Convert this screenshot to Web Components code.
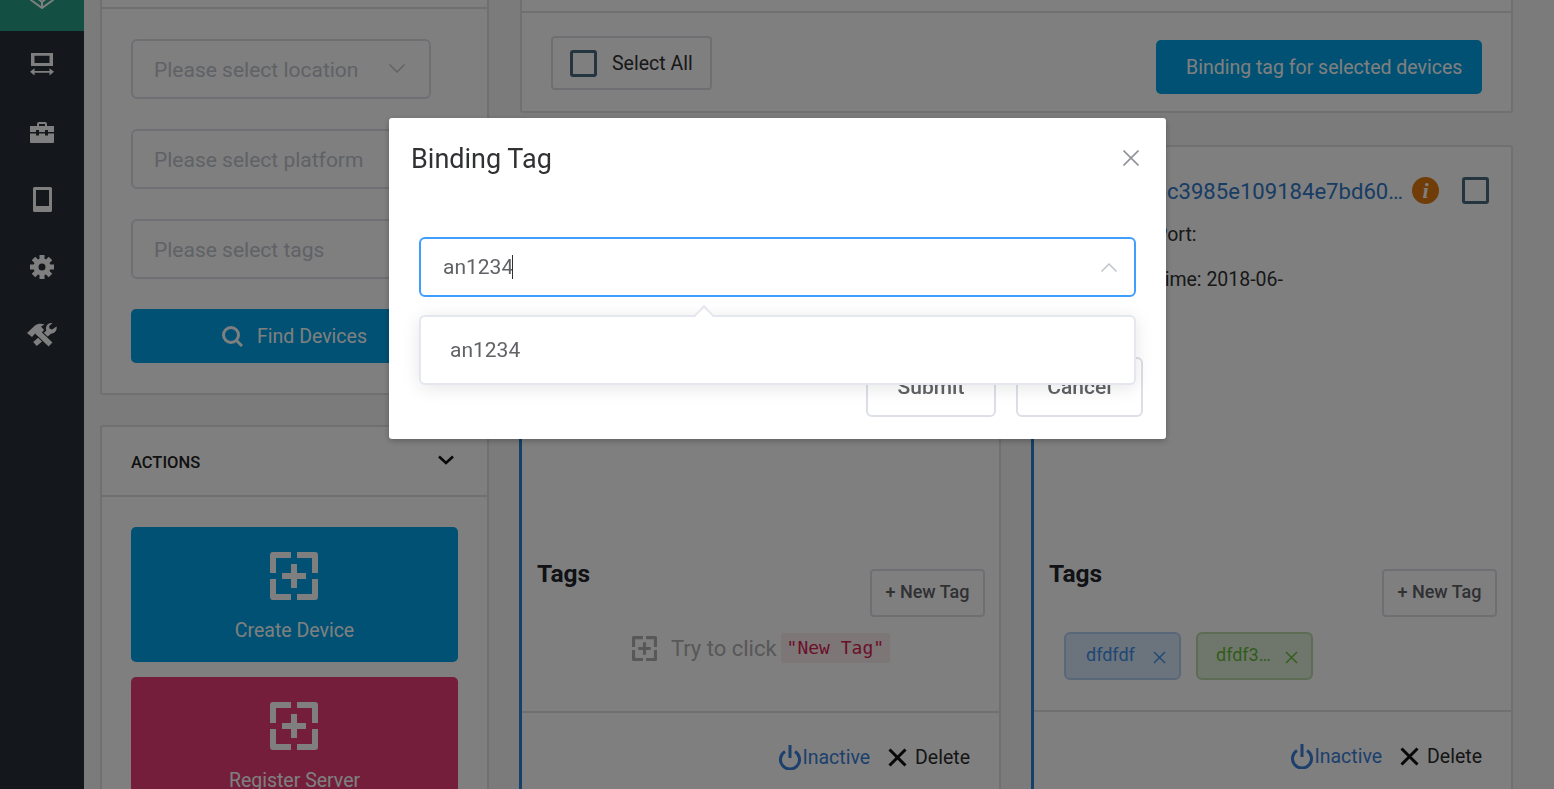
<!DOCTYPE html>
<html>
<head>
<meta charset="utf-8">
<title>Devices</title>
<style>
  html, body { margin: 0; height: 789px; overflow: hidden; background: #f6f6f6; }
  body { font-family: Roboto, "Liberation Sans", sans-serif; color: #303133; }
</style>
</head>
<body>
<device-page></device-page>

<script>
const addIcon = `<svg viewBox="0 0 48 48" fill="currentColor" style="display:block;width:100%;height:100%"><path d="M0 3a3 3 0 0 1 3-3h18v6H6v15H0zM27 0h18a3 3 0 0 1 3 3v18h-6V6H27zM0 27h6v15h15v6H3a3 3 0 0 1-3-3zM42 27h6v18a3 3 0 0 1-3 3H27v-6h15zM21 12h6v9h9v6h-9v9h-6v-9h-9v-6h9z"/></svg>`;

class AppSidebar extends HTMLElement {
  constructor() {
    super();
    this.attachShadow({ mode: "open" });
  }

  static get styles() {
    return /* css */`
      :host {
        display: block;
        flex: none;
        width: 84px;
        height: 789px;
        background: #283138;
        color: #fff;
      }
      .logo {
        height: 31px;
        background: #269e86;
        display: flex;
        justify-content: center;
        align-items: flex-end;
        overflow: hidden;
      }
      .logo svg { flex: none; margin-bottom: 22px; }
      .item {
        height: 67.5px;
        display: flex;
        align-items: center;
        justify-content: center;
      }
      svg { display: block; }
    `;
  }

  connectedCallback() {
    this.shadowRoot.innerHTML = /* html */`
    <style>${AppSidebar.styles}</style>
    <div class="logo">
      <svg width="24" height="24" viewBox="0 0 24 24" fill="none" stroke="#fff" stroke-width="2">
        <path d="M1 10v5l11 8 11-8v-5M6 12l6 5 6-5M12 17v6M1 15l5-3M23 15l-5-3"/>
      </svg>
    </div>
    <div class="item">
      <svg width="24" height="23" viewBox="0 0 24 25" preserveAspectRatio="none" fill="#fff">
        <path fill-rule="evenodd" d="M1 0h22v14H1zM4.500 3v8h15V3z"/>
        <path d="M0 20.500 4.500 16.500v3h15v-3l4.500 4-4.500 4v-3h-15v3z"/>
      </svg>
    </div>
    <div class="item">
      <svg width="24" height="21" viewBox="0 0 24 21" fill="#fff">
        <path fill-rule="evenodd" d="M7 4V2a2 2 0 0 1 2-2h6a2 2 0 0 1 2 2v2h7v6h-6V8h-3v2H9V8H6v2H0V4zM9 2v2h6V2z"/>
        <path d="M0 11.500h6v2h3v-2h6v2h3v-2h6V20a1 1 0 0 1-1 1H1a1 1 0 0 1-1-1z"/>
      </svg>
    </div>
    <div class="item">
      <svg width="19" height="25" viewBox="0 0 19 25" fill="#fff">
        <path fill-rule="evenodd" d="M1.500 0h16A1.500 1.500 0 0 1 19 1.500v22a1.500 1.500 0 0 1-1.500 1.500h-16A1.500 1.500 0 0 1 0 23.500v-22A1.500 1.500 0 0 1 1.500 0zM3 3v16h13V3z"/>
      </svg>
    </div>
    <div class="item">
      <svg width="24" height="24" viewBox="0 0 24 24">
        <g stroke="#fff" stroke-width="5">
          <path d="M12 0v24M0 12h24M3.500 3.500l17 17M20.500 3.500l-17 17"/>
        </g>
        <circle cx="12" cy="12" r="8.500" fill="#fff"/>
        <circle cx="12" cy="12" r="3.500" fill="#283138"/>
      </svg>
    </div>
    <div class="item">
      <svg width="30" height="24" viewBox="0 0 30 24">
        <path d="M23 8 8 21" stroke="#fff" stroke-width="5.500" fill="none"/>
        <path fill="#fff" d="M29.500 3.500c1 4-2.500 7.500-6.500 7-2.500-.5-4.500-3-4-6 .500-3 3.500-5 6.500-4.500L22 3.200l.7 2.500 2.500.7z"/>
        <path d="M10 8.500 23.500 21.500" stroke="#283138" stroke-width="7.500" fill="none"/>
        <path d="M10 8.500 23.500 21.500" stroke="#fff" stroke-width="5.500" fill="none"/>
        <path fill="#fff" d="M0 10 8 2.500C10.500.5 14 0 17.500 1.500L14 3.500l3 3.500-5.500 6-3-3-3.500 4z"/>
      </svg>
    </div>`;
  }
}

class SidePanel extends HTMLElement {
  constructor() {
    super();
    this.attachShadow({ mode: "open" });
  }

  connectedCallback() {
    const title = this.getAttribute("heading");
    this.shadowRoot.innerHTML = /* html */`
    <style>
      :host {
        display: block;
        box-sizing: border-box;
        background: #fff;
        border: 2px solid #e0e0e0;
        border-radius: 3px;
      }
      :host([clipped]) { border-top: 0; border-radius: 0 0 3px 3px; }
      header {
        box-sizing: border-box;
        height: var(--head, 70px);
        border-bottom: 2px solid #e0e0e0;
        display: flex;
        align-items: center;
        justify-content: space-between;
        padding: 2px 33px 0 29px;
        font-size: 16.500px;
        font-weight: 500;
        color: #1f2225;
      }
      .body { padding: var(--pad, 30px 29px); }
      svg { display: block; margin-top: -4px; }
    </style>
    <header>
      ${title ? `<span>${title}</span><svg width="16" height="10" viewBox="0 0 16 10" fill="none" stroke="#111" stroke-width="2.600"><path d="M1 1.500 8 8l7-6.500"/></svg>` : ""}
    </header>
    <div class="body"><slot></slot></div>`;
  }
}

class FilterSelect extends HTMLElement {
  constructor() {
    super();
    this.attachShadow({ mode: "open" });
    this.shadowRoot.innerHTML = /* html */`
    <style>
      :host {
        display: flex;
        box-sizing: border-box;
        width: 300px;
        height: 60px;
        align-items: center;
        justify-content: space-between;
        padding: 1px 24px 0 21px;
        margin-bottom: 30px;
        border: 2px solid #dcdfe6;
        border-radius: 6px;
        font-size: 21px;
        color: #c0c4cc;
        white-space: nowrap;
      }
      svg { flex: none; margin-top: -2px; }
    </style>
    <slot></slot>
    <svg width="16" height="9" viewBox="0 0 16 9" fill="none" stroke="#c0c4cc" stroke-width="1.500"><path d="M.5.500 8 8 15.500.500"/></svg>`;
  }
}

class PrimaryButton extends HTMLElement {
  constructor() {
    super();
    this.attachShadow({ mode: "open" });
    this.shadowRoot.innerHTML = /* html */`
    <style>
      :host {
        display: flex;
        box-sizing: border-box;
        height: 54px;
        align-items: center;
        justify-content: center;
        gap: 14px;
        background: #00a3e8;
        color: #fff;
        border-radius: 5px;
        font-size: 19.500px;
        white-space: nowrap;
      }
    </style>
    <slot></slot>`;
  }
}

class ActionTile extends HTMLElement {
  constructor() {
    super();
    this.attachShadow({ mode: "open" });
    this.shadowRoot.innerHTML = /* html */`
    <style>
      :host {
        display: flex;
        flex-direction: column;
        align-items: center;
        box-sizing: border-box;
        height: 135px;
        margin-bottom: 15px;
        padding-top: 25px;
        background: var(--tile, #00a3e8);
        color: #fff;
        border-radius: 5px;
        font-size: 19.500px;
      }
      .icon { width: 48px; height: 48px; margin: 0 1px 19px 0; }
    </style>
    <div class="icon">${addIcon}</div>
    <slot></slot>`;
  }
}

class CheckBox extends HTMLElement {
  constructor() {
    super();
    this.attachShadow({ mode: "open" });
    this.shadowRoot.innerHTML = /* html */`
    <style>
      :host {
        display: block;
        flex: none;
        box-sizing: border-box;
        width: 27px;
        height: 27px;
        border: 3px solid #4a6a80;
        border-radius: 3px;
      }
    </style>`;
  }
}

class TagChip extends HTMLElement {
  constructor() {
    super();
    this.attachShadow({ mode: "open" });
    this.shadowRoot.innerHTML = /* html */`
    <style>
      :host {
        display: flex;
        box-sizing: border-box;
        width: 117px;
        height: 48px;
        align-items: center;
        justify-content: space-between;
        padding: 0 13px 0 var(--left, 20px);
        border: 2px solid var(--line);
        background: var(--fill);
        color: var(--ink);
        border-radius: 6px;
        font-size: 18px;
      }
      span { margin-top: -3px; }
      svg { display: block; flex: none; margin-top: 3px; }
    </style>
    <span><slot></slot></span>
    <svg width="13" height="13" viewBox="0 0 13 13" fill="none" stroke="currentColor" stroke-width="1.400"><path d="m1 1 11 11M12 1 1 12"/></svg>`;
  }
}

class DeviceCard extends HTMLElement {
  constructor() {
    super();
    this.attachShadow({ mode: "open" });
    this.shadowRoot.innerHTML = /* html */`
    <style>
      :host {
        display: block;
        box-sizing: border-box;
        height: 760px;
        background: #fff;
        border: 2px solid #e0e0e0;
        border-left: 3px solid #2a80d0;
        border-radius: 3px;
      }
      .info { height: 412px; box-sizing: border-box; }
      .tags { height: var(--tags, 152px); box-sizing: border-box; padding: 0 14px 0 15px; }
      .tags-head {
        display: flex;
        justify-content: space-between;
        height: 73px;
      }
      h3 {
        margin: 0;
        font-size: 24.500px;
        font-weight: 700;
        line-height: 30px;
        color: #21252a;
      }
      .new-tag {
        box-sizing: border-box;
        width: 115px;
        height: 48px;
        margin-top: 10px;
        padding-bottom: 3px;
        border: 2px solid #dcdfe6;
        border-radius: 4px;
        display: flex;
        align-items: center;
        justify-content: center;
        font-size: 18px;
        font-weight: 500;
        color: #606266;
        background: #fff;
      }
      footer {
        box-sizing: border-box;
        border-top: 2px solid #e0e0e0;
        height: 90px;
        display: flex;
        justify-content: flex-end;
        align-items: center;
        gap: 18px;
        padding: 0 29px 0 0;
        font-size: 19.500px;
      }
      .power {
        display: flex;
        align-items: center;
        gap: 1px;
        color: #3a7fd8;
      }
      .remove {
        display: flex;
        align-items: center;
        gap: 8px;
        color: #2b2b2b;
      }
      svg { display: block; flex: none; }
    </style>
    <div class="info"><slot name="info"></slot></div>
    <div class="tags">
      <div class="tags-head"><h3>Tags</h3><div class="new-tag">+ New Tag</div></div>
      <slot></slot>
    </div>
    <footer>
      <div class="power">
        <svg width="22" height="25" viewBox="0 0 22 25" fill="none" stroke="currentColor" stroke-width="3"><path d="M6 6.500a9.500 9.500 0 1 0 10 0M11 0v13"/></svg>
        <span>Inactive</span>
      </div>
      <div class="remove">
        <svg width="19" height="19" viewBox="0 0 19 19" fill="none" stroke="#111" stroke-width="3"><path d="m1.500 1.500 16 16M17.500 1.500l-16 16"/></svg>
        <span>Delete</span>
      </div>
    </footer>`;
  }
}

class EmptyTags extends HTMLElement {
  constructor() {
    super();
    this.attachShadow({ mode: "open" });
    this.shadowRoot.innerHTML = /* html */`
    <style>
      :host {
        display: flex;
        align-items: center;
        justify-content: center;
        height: 30px;
        margin-top: 1px;
        font-size: 22px;
        color: #b0b0b0;
        white-space: nowrap;
      }
      .icon { width: 25px; height: 25px; margin-right: 14px; }
      code {
        font-family: "DejaVu Sans Mono", monospace;
        font-size: 18px;
        color: #d8204f;
        background: #f9ecef;
        border-radius: 3px;
        line-height: 30px;
        padding: 0 6px;
        margin-left: 4px;
      }
    </style>
    <div class="icon">${addIcon}</div>
    <span>Try to click</span><code>"New Tag"</code>`;
  }
}

class BindingDialog extends HTMLElement {
  constructor() {
    super();
    this.attachShadow({ mode: "open" });
  }

  static get styles() {
    return /* css */`
      :host {
        position: fixed;
        inset: 0;
        z-index: 10;
        display: block;
        background: rgba(0, 0, 0, .5);
      }
      .dialog {
        position: relative;
        box-sizing: border-box;
        width: 777px;
        height: 321px;
        margin: 118px 0 0 389px;
        background: #fff;
        border-radius: 3px;
        box-shadow: 0 2px 6px rgba(0, 0, 0, .25);
      }
      header {
        display: flex;
        justify-content: space-between;
        align-items: center;
        height: 84px;
        padding: 0 27px 0 22px;
        font-size: 27px;
        color: #303133;
      }
      header span { margin-top: -2px; }
      header svg { margin-top: -4px; }
      .content { padding: 35px 30px 0; }
      .input {
        box-sizing: border-box;
        width: 717px;
        height: 60px;
        display: flex;
        align-items: center;
        justify-content: space-between;
        padding: 0 17px 0 22px;
        border: 2px solid #409eff;
        border-radius: 6px;
        font-size: 21px;
        color: #606266;
      }
      .caret {
        display: inline-block;
        width: 1px;
        height: 24px;
        margin-left: -1px;
        background: #303133;
        vertical-align: -5px;
      }
      .actions {
        display: flex;
        justify-content: flex-end;
        gap: 20px;
        margin: 60px -7px 0 0;
      }
      .btn {
        box-sizing: border-box;
        height: 60px;
        border: 2px solid #dcdfe6;
        border-radius: 6px;
        display: flex;
        align-items: center;
        justify-content: center;
        font-size: 21px;
        font-weight: 500;
        color: #606266;
      }
      .submit { width: 130px; }
      .cancel { width: 127px; }
      .dropdown {
        position: absolute;
        left: 30px;
        top: 197px;
        box-sizing: border-box;
        width: 717px;
        height: 70px;
        display: flex;
        align-items: center;
        padding: 0 0 0 29px;
        background: #fff;
        border: 2px solid #e4e7ed;
        border-radius: 6px;
        box-shadow: 0 3px 18px rgba(0, 0, 0, .1);
        font-size: 21px;
        color: #606266;
      }
      .dropdown::before {
        content: "";
        position: absolute;
        left: 276px;
        top: -9px;
        width: 12px;
        height: 12px;
        background: #fff;
        border-left: 2px solid #e4e7ed;
        border-top: 2px solid #e4e7ed;
        transform: rotate(45deg);
      }
      svg { display: block; flex: none; }
    `;
  }

  connectedCallback() {
    this.shadowRoot.innerHTML = /* html */`
    <style>${BindingDialog.styles}</style>
    <div class="dialog">
      <header>
        <span>Binding Tag</span>
        <svg width="16" height="16" viewBox="0 0 16 16" fill="none" stroke="#909399" stroke-width="1.600"><path d="m.5.500 15 15M15.500.500l-15 15"/></svg>
      </header>
      <div class="content">
        <div class="input">
          <span>an1234<span class="caret"></span></span>
          <svg width="16" height="9" viewBox="0 0 16 9" fill="none" stroke="#c0c4cc" stroke-width="1.500"><path d="M.5 8.500 8 1l7.500 7.500"/></svg>
        </div>
        <div class="actions">
          <div class="btn submit">Submit</div>
          <div class="btn cancel">Cancel</div>
        </div>
      </div>
      <div class="dropdown">an1234</div>
    </div>`;
  }
}

class DevicePage extends HTMLElement {
  constructor() {
    super();
    this.attachShadow({ mode: "open" });
  }

  static get styles() {
    return /* css */`
      :host { display: flex; height: 789px; overflow: hidden; }
      .left {
        flex: none;
        width: 389px;
        margin-left: 16px;
        display: flex;
        flex-direction: column;
        gap: 30px;
      }
      .right {
        flex: none;
        width: 993px;
        margin-left: 31px;
        display: flex;
        flex-direction: column;
        gap: 32px;
      }
      .top-panel { --head: 13px; --pad: 23px 29px 17px 29px; }
      .filter-panel { --head: 9px; }
      .search { display: block; }
      .bar { display: flex; justify-content: space-between; align-items: flex-start; }
      .select-all {
        box-sizing: border-box;
        width: 161px;
        height: 54px;
        display: flex;
        align-items: center;
        gap: 15px;
        padding-left: 17px;
        border: 2px solid #dcdfe6;
        border-radius: 4px;
        font-size: 19.500px;
        color: #303133;
      }
      .bind { width: 326px; margin-top: 4px; justify-content: flex-start; padding-left: 30px; }
      .cards { display: grid; grid-template-columns: 482px 482px; gap: 30px; margin-left: -1px; }
      .head-text { padding-top: 29px; }
      .title {
        display: flex;
        justify-content: flex-end;
        align-items: center;
        height: 28px;
        padding-right: 22px;
        white-space: nowrap;
        font-size: 22.100px;
        color: #3078c8;
      }
      .title span:first-child { margin-top: 2px; }
      .info-dot {
        width: 27px;
        height: 27px;
        margin-left: 9px;
        margin-right: 23px;
        border-radius: 50%;
        background: #e07a10;
        color: #fff;
        font: italic bold 22px/27px "Liberation Serif", serif;
        text-align: center;
        flex: none;
      }
      .line {
        font-size: 19.500px;
        color: #303133;
        white-space: nowrap;
      }
      .chips { display: flex; gap: 15px; padding-left: 15px; }
      .blue { --line: #b3d0f0; --fill: #d6e6f8; --ink: #3f8fe8; }
      .green { --line: #bcd8ac; --fill: #dfeed8; --ink: #62b838; --left: 18px; }
    `;
  }

  connectedCallback() {
    this.shadowRoot.innerHTML = /* html */`
    <style>${DevicePage.styles}</style>
    <app-sidebar></app-sidebar>
    <div class="left">
      <side-panel class="filter-panel" clipped>
        <filter-select>Please select location</filter-select>
        <filter-select>Please select platform</filter-select>
        <filter-select>Please select tags</filter-select>
        <primary-button>
          <svg class="search" width="21" height="21" viewBox="0 0 21 21" fill="none" stroke="#fff" stroke-width="3"><circle cx="9" cy="9" r="7.500"/><path d="m14 14 6 6"/></svg>
          <span>Find Devices</span>
        </primary-button>
      </side-panel>
      <side-panel heading="ACTIONS">
        <action-tile>Create Device</action-tile>
        <action-tile style="--tile:#e83c78">Register Server</action-tile>
      </side-panel>
    </div>
    <div class="right">
      <side-panel class="top-panel" clipped>
        <div class="bar">
          <div class="select-all"><check-box></check-box><span>Select All</span></div>
          <primary-button class="bind">Binding tag for selected devices</primary-button>
        </div>
      </side-panel>
      <div class="cards">
        <device-card>
          <empty-tags></empty-tags>
        </device-card>
        <device-card style="--tags:151px">
          <div slot="info" class="head-text">
            <div class="title">
              <span>bc3985e109184e7bd60…</span>
              <span class="info-dot">i</span>
              <check-box></check-box>
            </div>
            <div class="line" style="margin-top:19px;padding-left:121px">Port:</div>
            <div class="line" style="margin-top:22px;padding-left:119px">Time: 2018-06-</div>
          </div>
          <div class="chips">
            <tag-chip class="blue">dfdfdf</tag-chip>
            <tag-chip class="green">dfdf3…</tag-chip>
          </div>
        </device-card>
      </div>
    </div>
    <binding-dialog></binding-dialog>`;
  }
}

customElements.define("app-sidebar", AppSidebar);
customElements.define("side-panel", SidePanel);
customElements.define("filter-select", FilterSelect);
customElements.define("primary-button", PrimaryButton);
customElements.define("action-tile", ActionTile);
customElements.define("check-box", CheckBox);
customElements.define("tag-chip", TagChip);
customElements.define("device-card", DeviceCard);
customElements.define("empty-tags", EmptyTags);
customElements.define("binding-dialog", BindingDialog);
customElements.define("device-page", DevicePage);
</script>
</body>
</html>
